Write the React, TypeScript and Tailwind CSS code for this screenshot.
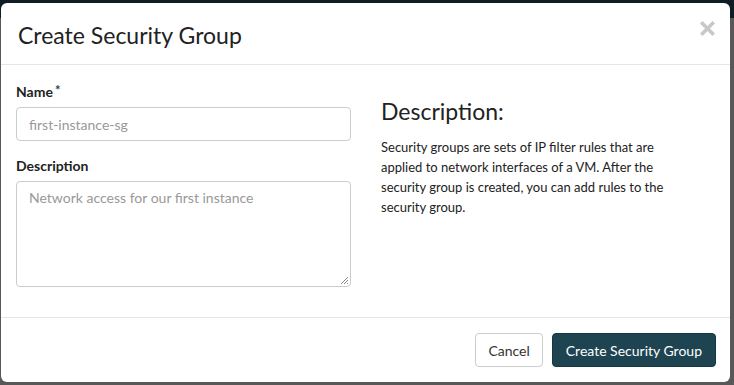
export default function App() {
  return (
    <div
      className="relative h-[385px] w-[734px] overflow-hidden bg-[#585858]"
      style={{ fontFamily: "Lato, 'Liberation Sans', sans-serif" }}
    >
      <div className="h-[18px] bg-[#0e1d24]" />
      <div className="absolute left-[1px] top-[3px] flex h-[379px] w-[729px] flex-col rounded-[6px] bg-white">
        <div className="flex h-[62px] items-start justify-between border-b border-[#e5e5e5] pl-[17px] pr-[15px]">
          <h4 className="pt-[17px] text-[23px] leading-[30px] text-[#222]">Create Security Group</h4>
          <svg className="mt-[18px]" width="15" height="15" viewBox="0 0 15 15">
            <path d="M2.5 2.5L12.5 12.5M12.5 2.5L2.5 12.5" stroke="#c8c8c8" strokeWidth="3.6" strokeLinecap="square" />
          </svg>
        </div>
        <div className="flex flex-1 gap-[30px] px-[15px] pt-[17px]">
          <div className="flex w-[335px] flex-col">
            <label className="text-[14px] font-bold leading-[20px] text-[#222]">
              Name<sup className="relative -top-[2px] ml-[2px] text-[13px] text-[#1e4452]">*</sup>
            </label>
            <div className="mt-[5px] flex h-[34px] items-center rounded-[4px] border border-[#ccc] px-[12px] text-[14px] text-[#999]">
              first-instance-sg
            </div>
            <label className="mt-[15px] text-[14px] font-bold leading-[20px] text-[#222]">Description</label>
            <div className="relative mt-[5px] h-[106px] rounded-[4px] border border-[#ccc] px-[12px] py-[6px] text-[14px] leading-[20px] text-[#999]">
              Network access for our first instance
              <svg className="absolute bottom-[1px] right-[1px]" width="10" height="10" viewBox="0 0 10 10">
                <path d="M9 2L2 9M9 5L5 9M9 8L8 9" stroke="#888" strokeWidth="1" />
              </svg>
            </div>
          </div>
          <div className="flex w-[310px] flex-col">
            <h3 className="mt-[12px] text-[23px] leading-[34px] text-[#222]">Description:</h3>
            <p className="mt-[9px] text-[13px] leading-[20px] text-[#222]">
              Security groups are sets of IP filter rules that are applied to network interfaces of a VM. After the security group is created, you can add rules to the security group.
            </p>
          </div>
        </div>
        <div className="flex h-[65px] items-start justify-end gap-[9px] border-t border-[#e5e5e5] pr-[14px] pt-[15px]">
          <button className="h-[34px] rounded-[4px] border border-[#ccc] bg-white px-[12px] text-[14px] text-[#333]">
            Cancel
          </button>
          <button className="h-[34px] rounded-[4px] border border-[#163640] bg-[#1e4452] px-[13px] text-[14px] text-white">
            Create Security Group
          </button>
        </div>
      </div>
    </div>
  );
}
